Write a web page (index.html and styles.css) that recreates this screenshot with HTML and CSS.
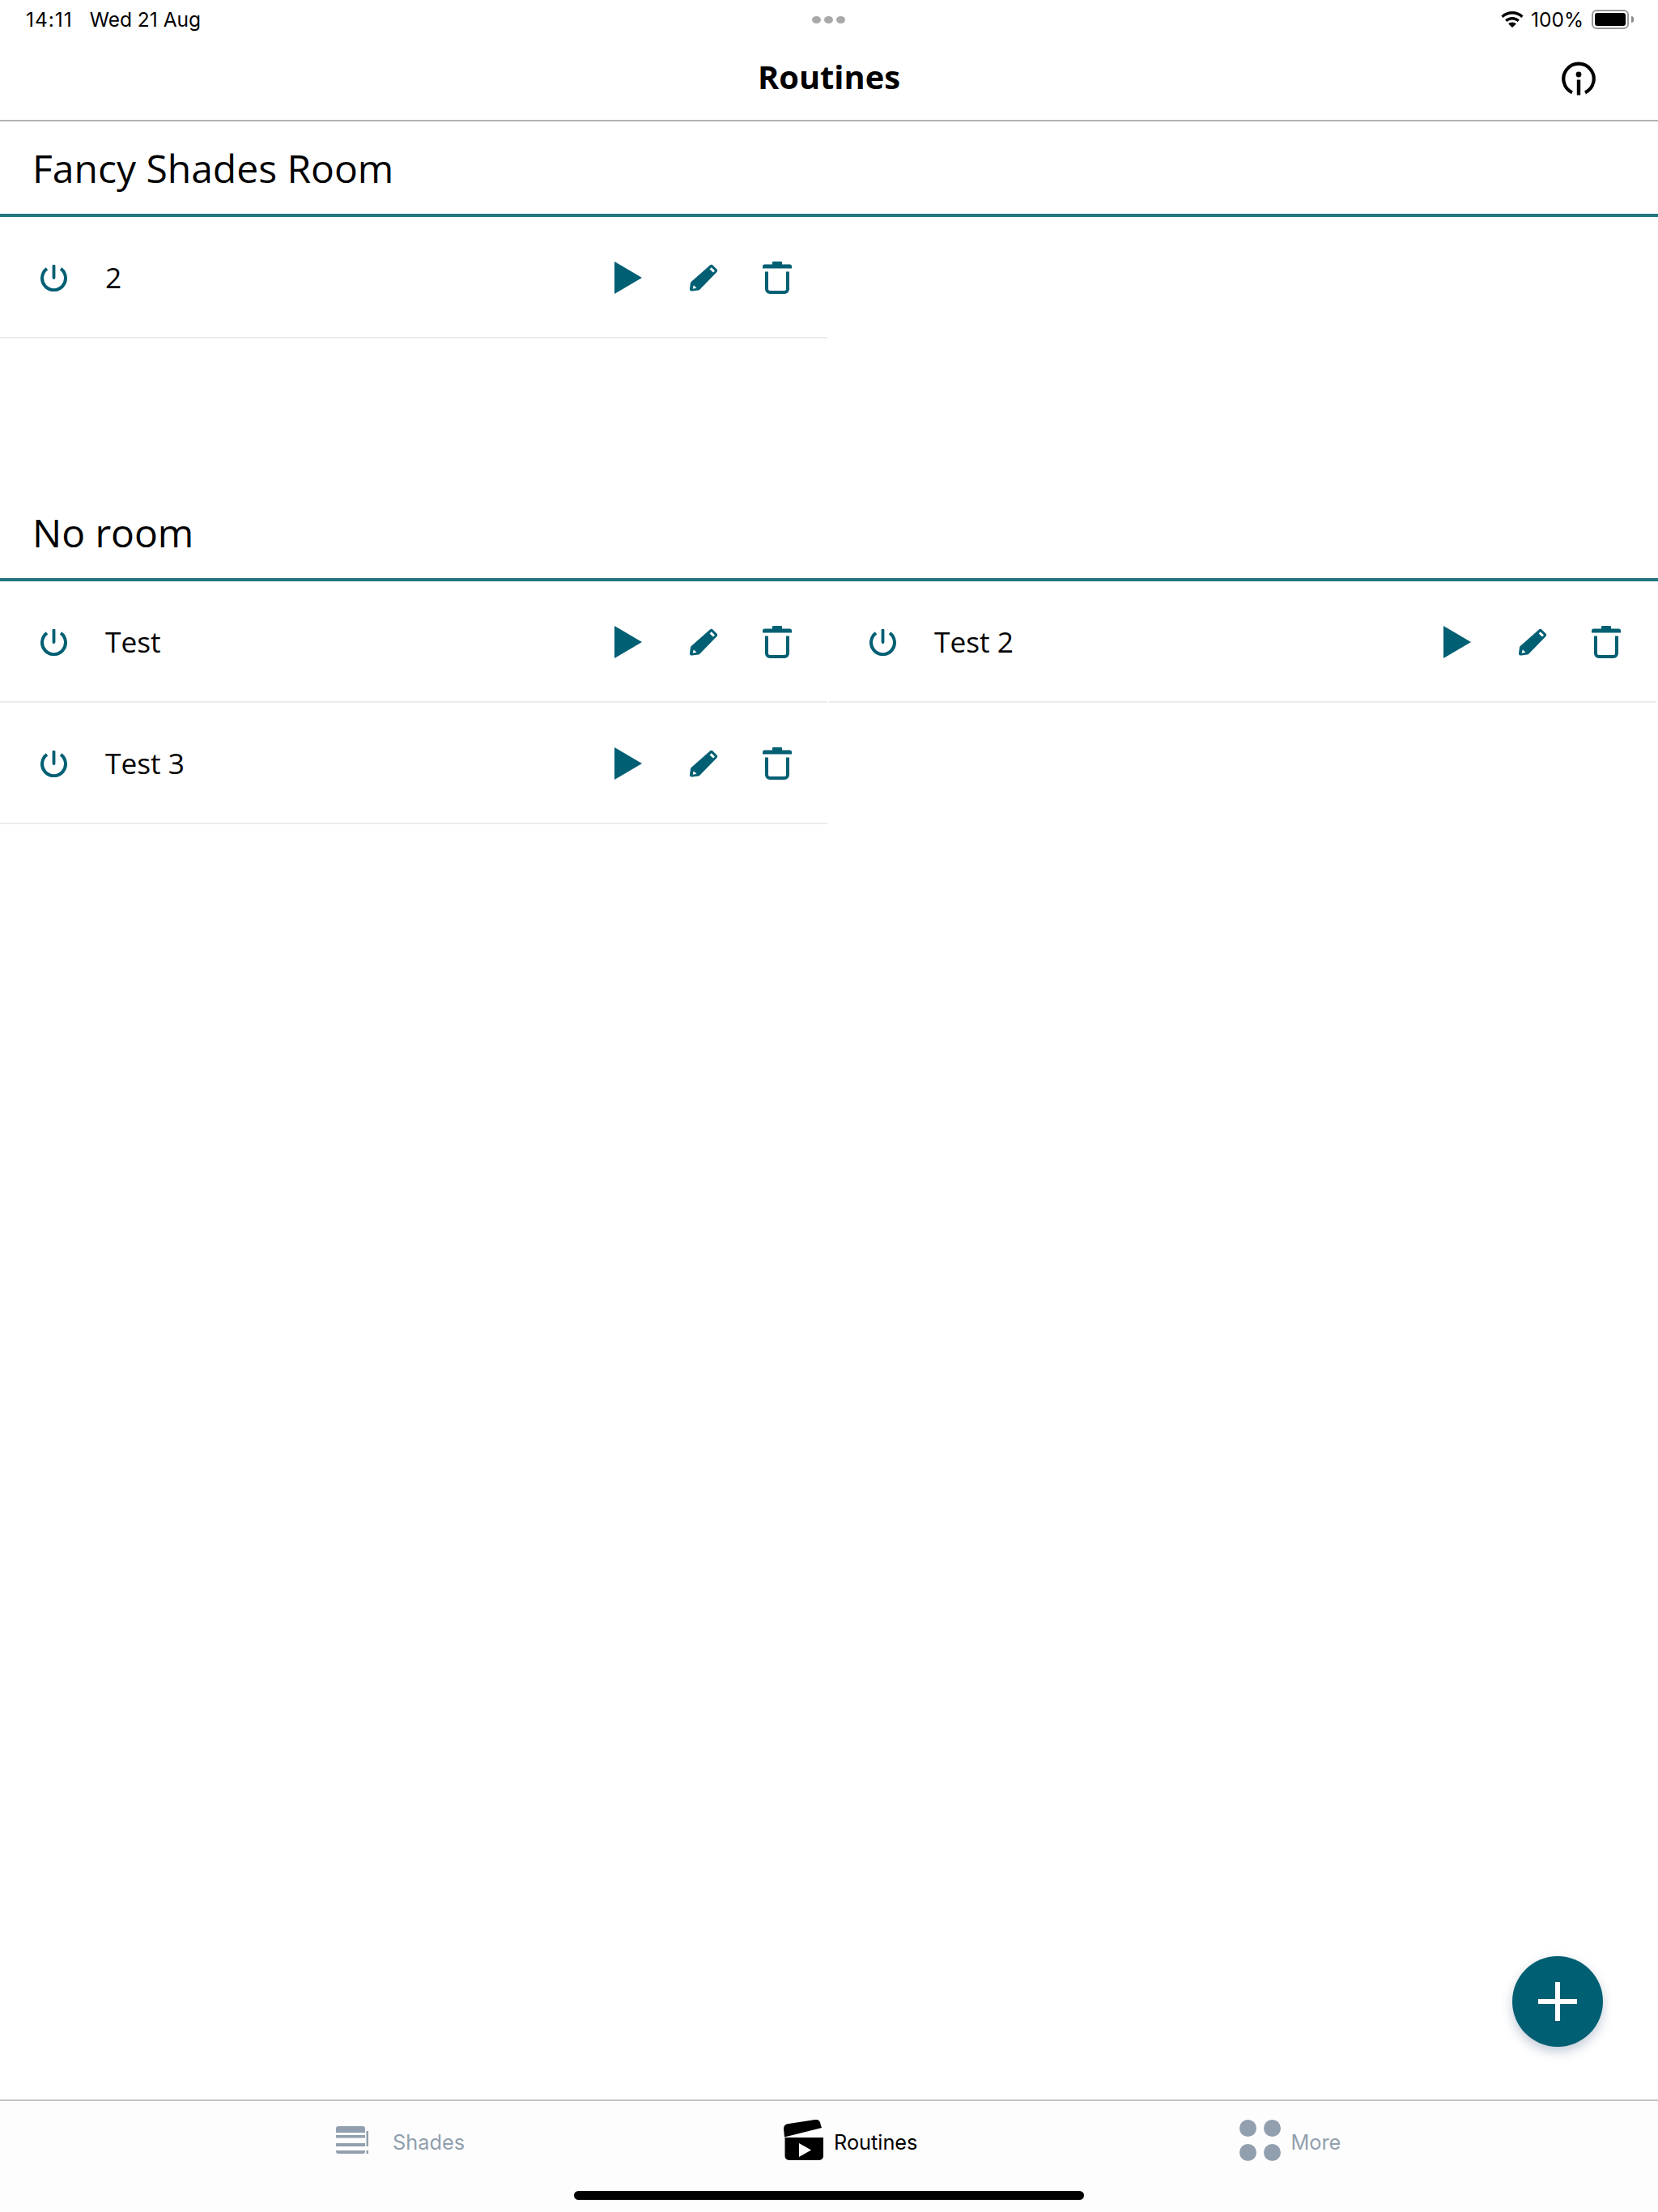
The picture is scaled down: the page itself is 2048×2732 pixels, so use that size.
FILE: index.html
```html
<!DOCTYPE html>
<html lang="en">
<head>
<meta charset="utf-8">
<title>Routines</title>
<link rel="stylesheet" href="styles.css">
</head>
<body>
<svg class="defs" width="0" height="0" aria-hidden="true">
  <symbol id="i-power" viewBox="0 0 33 33">
    <path d="M8 4.900A14.500 14.500 0 1 0 25 4.900" fill="none" stroke="currentColor" stroke-width="4"/>
    <path d="M16.500 1.500V16" fill="none" stroke="currentColor" stroke-width="3.800" stroke-linecap="round"/>
  </symbol>
  <symbol id="i-play" viewBox="0 0 34 40">
    <path d="M0 0L34 20L0 40Z" fill="currentColor"/>
  </symbol>
  <symbol id="i-pencil" viewBox="0 0 35 34">
    <path fill-rule="evenodd" fill="currentColor" d="M25 1.500a2.500 2.500 0 0 1 3.400 0l5 5a2.500 2.500 0 0 1 0 3.400L12.500 31.500a3 3 0 0 1-2 .9L3 33.500a2.500 2.500 0 0 1-3-2.800L.9 24a3 3 0 0 1 .9-2ZM26.800 4.300L24.600 6.500L29 10.500L31 8.400ZM4.800 26.300L3.700 30.700L8.500 29.700Z"/>
  </symbol>
  <symbol id="i-trash" viewBox="0 0 36 40">
    <path fill="currentColor" d="M13 0h10a1 1 0 0 1 1 1v2.500h9.500a2.500 2.500 0 0 1 2.500 2.500v2.500H0V6a2.500 2.500 0 0 1 2.500-2.500H12V1a1 1 0 0 1 1-1Z"/>
    <path fill="none" stroke="currentColor" stroke-width="4" d="M5 12.500V34a4 4 0 0 0 4 4h18a4 4 0 0 0 4-4V12.500"/>
  </symbol>
</svg>
<div class="screen">
  <div class="status">
    <div class="status-left"><span class="status-time">14:11</span><span>Wed 21 Aug</span></div>
    <div class="status-dots"><i></i><i></i><i></i></div>
    <div class="status-right">
      <svg class="wifi" viewBox="0 0 28 20"><path fill="#000" d="M14 0C8.700 0 4 2 .4 5.400L2.700 8C5.700 5.200 9.600 3.500 14 3.500S22.300 5.200 25.300 8l2.300-2.600C24 2 19.300 0 14 0Z"/><path fill="#000" d="M14 7c-3.400 0-6.500 1.300-8.900 3.500l2.300 2.600C9.200 11.500 11.500 10.500 14 10.500s4.800 1 6.600 2.600l2.300-2.600C20.500 8.300 17.400 7 14 7Z"/><path fill="#000" d="M14 13.500c-1.900 0-3.500.7-4.800 1.900L14 20l4.800-4.600c-1.300-1.200-2.900-1.900-4.800-1.900Z"/></svg>
      <span class="battery-text">100%</span>
      <span class="battery"><span class="battery-fill"></span></span>
      <span class="battery-nub"></span>
    </div>
  </div>
  <header class="nav">
    <h1 class="nav-title">Routines</h1>
    <svg class="nav-info" viewBox="0 0 42 42"><path d="M13 38.300A18.700 18.700 0 1 1 29 38.300" fill="none" stroke="#000" stroke-width="4.200"/><circle cx="21" cy="16" r="3.400" fill="#000"/><rect x="18.800" y="22.500" width="4.400" height="19" fill="#000"/></svg>
  </header>
  <main class="content">
    <section class="room">
      <h2 class="room-title">Fancy Shades Room</h2>
      <div class="grid">
        <div class="row">
          <svg class="ic-power"><use href="#i-power"/></svg>
          <span class="row-name">2</span>
          <svg class="ic-play"><use href="#i-play"/></svg>
          <svg class="ic-pencil"><use href="#i-pencil"/></svg>
          <svg class="ic-trash"><use href="#i-trash"/></svg>
        </div>
      </div>
    </section>
    <section class="room room-next">
      <h2 class="room-title">No room</h2>
      <div class="grid">
        <div class="row">
          <svg class="ic-power"><use href="#i-power"/></svg>
          <span class="row-name">Test</span>
          <svg class="ic-play"><use href="#i-play"/></svg>
          <svg class="ic-pencil"><use href="#i-pencil"/></svg>
          <svg class="ic-trash"><use href="#i-trash"/></svg>
        </div>
        <div class="row">
          <svg class="ic-power"><use href="#i-power"/></svg>
          <span class="row-name">Test 2</span>
          <svg class="ic-play"><use href="#i-play"/></svg>
          <svg class="ic-pencil"><use href="#i-pencil"/></svg>
          <svg class="ic-trash"><use href="#i-trash"/></svg>
        </div>
        <div class="row">
          <svg class="ic-power"><use href="#i-power"/></svg>
          <span class="row-name">Test 3</span>
          <svg class="ic-play"><use href="#i-play"/></svg>
          <svg class="ic-pencil"><use href="#i-pencil"/></svg>
          <svg class="ic-trash"><use href="#i-trash"/></svg>
        </div>
      </div>
    </section>
  </main>
  <button class="fab" type="button" aria-label="Add"><span class="fab-h"></span><span class="fab-v"></span></button>
  <nav class="tabs">
    <div class="tab tab-shades">
      <svg class="tab-ic-shades" viewBox="0 0 40 34"><path fill="#919fae" d="M3 0h30a3 3 0 0 1 3 3v5H0V3a3 3 0 0 1 3-3Z"/><rect y="11" width="36" height="3.500" fill="#919fae"/><rect y="21" width="36" height="4" fill="#919fae"/><path fill="#919fae" d="M0 30h36v1a3 3 0 0 1-3 3H3a3 3 0 0 1-3-3Z"/><rect x="37.500" y="6" width="2.500" height="19" fill="#919fae"/><rect x="37.500" y="30" width="2.500" height="4" fill="#919fae"/></svg>
      <span class="tab-label">Shades</span>
    </div>
    <div class="tab tab-routines">
      <svg class="tab-ic-routines" viewBox="0 0 49 50"><path fill="#000" d="M0 11a6 6 0 0 1 4.500-5.800L37 .2a6 6 0 0 1 8.500 5.500L47 10 1 21.500Z"/><path fill="#000" d="M1.500 22H49v23a5 5 0 0 1-5 5H6.500a5 5 0 0 1-5-5Z"/><path fill="#fff" d="M19 29l15 8.500-15 8.500Z"/></svg>
      <span class="tab-label tab-label-active">Routines</span>
    </div>
    <div class="tab tab-more">
      <span class="more-dots"><i></i><i></i><i></i><i></i></span>
      <span class="tab-label">More</span>
    </div>
  </nav>
  <div class="home-bar"><span class="home-indicator"></span></div>
</div>
</body>
</html>
```
FILE: styles.css
```css
* { box-sizing: border-box; }
html, body { margin: 0; padding: 0; background: #fff; }
body { width: 2048px; height: 2732px; overflow: hidden; font-family: "Open Sans", "Liberation Sans", sans-serif; color: #000; }
.defs { position: absolute; }
.screen { position: relative; width: 2048px; height: 2732px; display: flex; flex-direction: column; }

.status { height: 50px; display: flex; align-items: center; justify-content: space-between; padding: 0 30px 2px 32px; font-family: Inter, "Liberation Sans", sans-serif; font-size: 24.500px; flex: none; position: relative; }
.status-left { display: flex; gap: 21px; }
.status-time { letter-spacing: 1px; }
.status-dots { position: absolute; left: 1003px; top: 20px; display: flex; gap: 4px; }
.status-dots i { width: 11px; height: 9px; border-radius: 50%; background: #a9a9a9; display: block; }
.status-right { display: flex; align-items: center; }
.wifi { width: 28px; height: 20px; margin-right: 9px; }
.battery-text { margin-right: 10px; }
.battery { width: 46px; height: 24px; border: 2px solid #9a9a9a; border-radius: 6px; padding: 2px; display: block; }
.battery-fill { display: block; width: 100%; height: 100%; background: #000; border-radius: 3px; }
.battery-nub { width: 3px; height: 8px; background: #8a8a8a; border-radius: 0 3px 3px 0; margin-left: 3px; }

.nav { height: 100px; flex: none; position: relative; display: flex; align-items: center; justify-content: center; border-bottom: 2px solid #b3b3b3; padding-bottom: 9px; }
.nav-title { margin: 0; font-size: 39.800px; font-weight: 700; line-height: 1; }
.nav-info { position: absolute; left: 1929px; top: 26px; width: 42px; height: 42px; overflow: hidden; }

.content { flex: 1; min-height: 0; }
.room-next { margin-top: 182px; }
.room-title { margin: 0; height: 118px; padding: 2px 0 0 40px; display: flex; align-items: center; font-size: 48px; font-weight: 400; line-height: 1; border-bottom: 4px solid #237680; }
.grid { display: grid; grid-template-columns: 1022px 1022px; column-gap: 2px; }
.row { height: 150px; display: flex; align-items: center; padding: 2px 44px 0 50px; border-bottom: 2px solid #ececec; color: #005f73; }
.ic-power { width: 33px; height: 33px; flex: none; }
.row-name { color: #000; font-size: 35.300px; margin: 0 auto 2px 47px; }
.ic-play { width: 34px; height: 40px; flex: none; }
.ic-pencil { width: 35px; height: 34px; flex: none; margin-left: 59px; }
.ic-trash { width: 36px; height: 40px; flex: none; margin-left: 55px; }

.fab { position: absolute; left: 1868px; top: 2416px; width: 112px; height: 112px; border: 0; border-radius: 50%; background: #005f73; box-shadow: 0 6px 14px rgba(40, 70, 110, 0.28); padding: 0; }
.fab-h { position: absolute; left: 32px; top: 53px; width: 48px; height: 6px; background: #fff; }
.fab-v { position: absolute; left: 53px; top: 32px; width: 6px; height: 48px; background: #fff; }

.tabs { height: 98px; flex: none; border-top: 2px solid #c4c4c4; background: #fdfdfd; display: flex; align-items: center; padding: 0 0 0 415px; font-family: Inter, "Liberation Sans", sans-serif; font-size: 25.300px; }
.tab { display: flex; align-items: center; }
.tab-routines { margin-left: 394px; }
.tab-more { margin-left: 398px; }
.tab-ic-shades { width: 40px; height: 34px; margin-right: 30px; }
.tab-ic-routines { width: 49px; height: 50px; margin-right: 13px; }
.more-dots { width: 51px; height: 51px; display: grid; grid-template-columns: 21px 21px; grid-template-rows: 21px 21px; column-gap: 9px; row-gap: 9px; margin-right: 12px; }
.more-dots i { background: #919fae; border-radius: 50%; display: block; }
.tab-label { color: #919fae; margin-top: 4px; }
.tab-label-active { color: #000; }

.home-bar { height: 41px; flex: none; background: #fdfdfd; display: flex; justify-content: center; padding-top: 15px; }
.home-indicator { width: 630px; height: 11px; background: #000; border-radius: 6px; display: block; }
```
